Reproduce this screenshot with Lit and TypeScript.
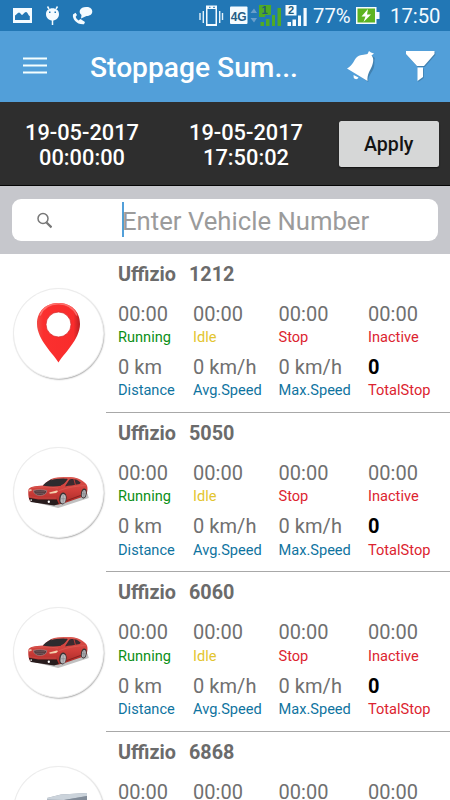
import { LitElement, html, css, svg } from "lit";
import { customElement } from "lit/decorators.js";

type Kind = "pin" | "car" | "truck";

const pinArt = svg`
  <defs>
    <linearGradient id="pg" x1="0" y1="0" x2="1" y2="0">
      <stop offset="0" stop-color="#f04a45"/><stop offset=".15" stop-color="#fb302f"/>
      <stop offset=".85" stop-color="#f92c2c"/><stop offset="1" stop-color="#b81f22"/>
    </linearGradient>
  </defs>
  <path d="M44.500 73.500C40 65.500 23 50.500 23 35C23 22 32 14 44.500 14S66 22 66 35C66 50.500 49 65.500 44.500 73.500Z" fill="url(#pg)"/>
  <path d="M26 26.500C29.500 18 36.500 14.800 44.500 14.800S59 18 63 26.500" fill="none" stroke="#ff8a85" stroke-width="1.500" opacity=".7"/>
  <circle cx="44.500" cy="35.500" r="12.500" fill="#fff" stroke="#d92a2a" stroke-width=".8"/>`;

const carArt = svg`
  <defs>
    <linearGradient id="cg" x1="0" y1="0" x2="0" y2="1">
      <stop offset="0" stop-color="#d9534c"/><stop offset=".5" stop-color="#cf3e3a"/><stop offset="1" stop-color="#a52a27"/>
    </linearGradient>
  </defs>
  <g transform="translate(9.500 22.100) scale(.3333)">
    <path d="M14 92L104 114L196 84L192 70L120 80Z" fill="#8d8d8d" opacity=".55"/>
    <path d="M15 58C17 51 32 47 58 46C70 35 80 27 92 24C112 20 138 20 152 22C166 24 176 31 184 38C190 42 193 50 192 58L190 72L172 82L128 97L106 103L90 104L22 94C15 90 13 70 15 58Z" fill="url(#cg)"/>
    <path d="M58 46C70 35 80 28 90 27C106 25 124 25 133 27C128 35 120 44 113 47C96 50 74 50 58 46Z" fill="#2d2b2e"/>
    <path d="M124 49L138 28C150 25 160 27 172 38L168 42C150 46 138 47 124 49Z" fill="#3a2b30"/>
    <path d="M151 26L156 45" stroke="#b93b38" stroke-width="3"/>
    <path d="M84 29C104 22 138 20 156 25" stroke="#e0685f" fill="none" stroke-width="2"/>
    <path d="M106 62C130 52 160 47 190 46" stroke="#da5f58" fill="none" stroke-width="2"/>
    <path d="M24 53C46 49 80 50 104 54" stroke="#da5f58" fill="none" stroke-width="2"/>
    <path d="M128 92L172 76" stroke="#84211f" stroke-width="3"/>
    <ellipse cx="119" cy="48" rx="7" ry="4.500" fill="#d2443f"/>
    <path d="M30 61C42 58 60 58 70 62C68 71 62 76 50 76C38 76 31 71 30 61Z" fill="#54363a" stroke="#a78f8f" stroke-width="2"/>
    <path d="M36 65H65M38 70H62" stroke="#8b7375" stroke-width="1.500"/>
    <path d="M77 67L100 61L104 63L98 69L79 71Z" fill="#f4d2ae"/>
    <path d="M16 59L23 57L25 62L17 64Z" fill="#edc0a8"/>
    <path d="M16 83L44 88L100 88L106 102L92 106L22 96Z" fill="#271c1d"/>
    <path d="M18 80L46 84L98 84" stroke="#c9504a" stroke-width="2" fill="none"/>
    <circle cx="76" cy="95" r="3.500" fill="#fff"/><circle cx="23" cy="90" r="2.500" fill="#eee"/>
    <ellipse cx="118" cy="85" rx="11" ry="18" fill="#3a3233" transform="rotate(8 118 85)"/>
    <ellipse cx="119" cy="86" rx="8" ry="14" fill="#b9b9bc" transform="rotate(8 119 86)"/>
    <ellipse cx="181" cy="70" rx="8.500" ry="15" fill="#3a3233" transform="rotate(8 181 70)"/>
    <ellipse cx="181" cy="71" rx="6" ry="11.500" fill="#b0b0b4" transform="rotate(8 181 71)"/>
    <path d="M119 74V98M112 86H126M181 61V81M176 71H186" stroke="#85858a" stroke-width="2"/>
  </g>`;

const truckArt = svg`
  <path d="M33 31L47 27.500L73 26L73 60L33 60Z" fill="#98a1ad"/>
  <path d="M33 31L47 27.500L73 26L73 29L50 33L33 32.500Z" fill="#cbd3db"/>
  <path d="M50 33L73 29V60H50Z" fill="#828c99"/>`;

@customElement("vehicle-badge")
class VehicleBadge extends LitElement {
  static properties = { kind: {} };
  declare kind: Kind;
  static styles = css`
    :host { display: block; width: 89px; height: 89px; border-radius: 50%; background: #fff;
      box-shadow: 0 0 0 1px #ececec, .7px .9px 1.500px 0.500px rgba(0,0,0,.42); }
    svg { display: block; width: 89px; height: 89px; }
  `;
  render() {
    const art = this.kind === "pin" ? pinArt : this.kind === "car" ? carArt : truckArt;
    return html`<svg viewBox="0 0 89 89">${art}</svg>`;
  }
}

@customElement("vehicle-row")
class VehicleRow extends LitElement {
  static properties = { number: {}, kind: {} };
  declare number: string;
  declare kind: Kind;
  static styles = css`
    :host { display: flex; height: 159.4px; flex: none; box-sizing: border-box; }
    .side { width: 105.500px; padding: 35.300px 0 0 14px; box-sizing: border-box; flex: none; }
    .body { flex: 1; border-bottom: 1px solid #a8a8a8; padding-left: 12.500px; box-sizing: border-box; }
    .name { font-weight: 700; font-size: 19.8px; line-height: 24px; color: #6b6b6b; padding-top: 9px; white-space: pre; height: 24px; }
    .name span { display: inline-block; width: 71px; }
    .grid { display: grid; grid-template-columns: 75px 85.500px 89.500px 1fr; padding-top: 15.200px; }
    .cell { height: 53.200px; }
    .val { font-size: 20px; line-height: 24px; color: #707070; letter-spacing: .05px; white-space: nowrap; }
    .val.total { color: #000; font-weight: 700; }
    .lab { font-size: 14.600px; line-height: 18px; margin-top: 2.300px; white-space: nowrap; }
    .green { color: #0b8f17; } .yellow { color: #e3c52f; } .red { color: #dc2430; } .blue { color: #0f749f; }
  `;
  render() {
    const cells = [
      ["00:00", "Running", "green"], ["00:00", "Idle", "yellow"], ["00:00", "Stop", "red"], ["00:00", "Inactive", "red"],
      ["0 km", "Distance", "blue"], ["0 km/h", "Avg.Speed", "blue"], ["0 km/h", "Max.Speed", "blue"], ["0", "TotalStop", "red"],
    ];
    const shown = this.kind === "truck" ? cells.slice(0, 4).map(([v]) => [v, "", ""]) : cells;
    return html`
      <div class="side"><vehicle-badge .kind=${this.kind}></vehicle-badge></div>
      <div class="body">
        <div class="name"><span>Uffizio</span>${this.number}</div>
        <div class="grid">${shown.map(([v, l, c]) => html`
          <div class="cell"><div class="val ${l === "TotalStop" ? "total" : ""}">${v}</div><div class="lab ${c}">${l}</div></div>`)}
        </div>
      </div>`;
  }
}

@customElement("status-bar")
class StatusBar extends LitElement {
  static styles = css`
    :host { display: flex; height: 31px; background: #2277b5; color: #f4fbff; align-items: center; flex: none; }
    svg { display: block; flex: none; }
    .gap { flex: 1; }
    .pct { font-size: 20.300px; width: 38px; margin-left: 6px; white-space: nowrap; padding-top: 1px; }
    .batt { margin-left: 5px; }
    .time { font-size: 20.300px; margin-left: 9px; width: 60px; white-space: nowrap; padding-top: 1px; }
    .net { font: 700 13px "Liberation Sans", Arial, sans-serif; }
    .sim { font: 700 11px "Liberation Sans", Arial, sans-serif; }
  `;
  render() {
    return html`
      <svg width="100" height="31" viewBox="0 0 100 31" fill="#f4fbff">
        <path d="M13 8H32V23H13Z"/>
        <path d="M15 20V15.500C16.500 15 17.500 12.500 19 12.500S21 15 22 15C23 15 24.500 11.800 26 12C28 12.200 28 15.500 29.800 16V20Z" fill="#2277b5"/>
        <path fill-rule="evenodd" d="M46 14C46 10.500 49 8.300 52.500 8.300S59 10.500 59 14C59 18 56 20.500 52.500 20.500S46 18 46 14ZM49 11.500v1.500h1.500v-1.500ZM54.500 11.500v1.500H56v-1.500Z"/>
        <path d="M49 9L47.500 6.500M56 9L57.500 6.500M52.500 20V25" stroke="#f4fbff" stroke-width="1.500"/>
        <path d="M73 14.500C72 19 77 25 84 24.300L85 22L80.500 19L78.500 20.500C77 19.500 76 18 75.700 16.800L77 15L75.500 12.800Z"/>
        <path d="M86 7C90 6.500 92.300 9 92.300 11.500C92.300 14.500 89.500 16 86.500 16L81 18.500L81.500 15C79.500 13.500 79.300 11.500 80 10C81 8 83 7 86 7Z"/>
      </svg>
      <div class="gap"></div>
      <svg width="109" height="31" viewBox="198 0 109 31">
        <path fill="#f4fbff" fill-rule="evenodd" d="M206 5.500H217V26H206ZM207.500 9V24H215.500V9Z"/>
        <path d="M209 7.300h1.500M213 7.300h2" stroke="#2277b5"/>
        <path d="M200 13V20M203.300 11V23M219.700 11V23M222.500 13V20" stroke="#e4f2fb" stroke-width="1.400"/>
        <rect x="230" y="6.500" width="17.500" height="17.500" rx="1" fill="#f4fbff"/>
        <text class="net" x="230.700" y="20.500" textLength="16" lengthAdjust="spacingAndGlyphs" fill="#245d86">4G</text>
        <path d="M250.500 13L254 8.500L257 13ZM250.500 18L254 22.500L257 18Z" fill="#6a9fcb"/>
        <path d="M259 5H271V15H265V17H259Z" fill="#4faa25"/>
        <text class="sim" x="261.500" y="14" fill="#225a78">1</text>
        <path d="M260.500 22H264V26H260.500ZM266 19H269.500V26H266ZM272 15H275V26H272ZM277.500 8H281V26H277.500Z" fill="#4faa25"/>
        <rect x="285.500" y="5" width="11" height="10.500" fill="#f4fbff"/>
        <text class="sim" x="288" y="14" fill="#225a78">2</text>
        <path d="M287.500 22H291V26H287.500ZM292.500 19.500H296V26H292.500ZM298 15.500H301V26H298ZM303.500 8H306.700V26H303.500Z" fill="#f4fbff"/>
      </svg>
      <div class="pct">77%</div>
      <svg class="batt" width="25" height="31" viewBox="0 0 25 31">
        <path d="M0 7H20.500V12H23.500V19H20.500V24H0Z" fill="#f4fbff"/>
        <rect x="1.500" y="8.500" width="17.500" height="14" fill="#5db321"/>
        <path d="M12 9L5.500 16.500H9.500L7.500 22L15 14.500H11Z" fill="#fff"/>
      </svg>
      <div class="time">17:50</div>`;
  }
}

@customElement("app-root")
class AppRoot extends LitElement {
  static styles = css`
    :host { display: flex; flex-direction: column; width: 450px; height: 800px; overflow: hidden; background: #fff;
      font-family: Roboto, "Noto Sans", sans-serif; }
    .bar { height: 70.500px; background: #529fd9; display: flex; align-items: center; flex: none; }
    .bar svg { display: block; flex: none; }
    .title { width: 251px; margin-left: 42px; font-size: 28.200px; font-weight: 500; color: #fff; white-space: nowrap; padding-top: 2px; }
    .range { height: 84.500px; background: #2e2e2e; border-bottom: 1.500px solid #050505; box-sizing: border-box; display: flex; flex: none;
      color: #fff; font-size: 21.800px; font-weight: 500; line-height: 25.500px; text-align: center; }
    .date { width: 164px; padding-top: 18px; flex: none; }
    .apply { width: 100.500px; height: 45.500px; margin: 19.500px 0 0 10.500px; background: #d6d7d7; border-radius: 2.500px; color: #141414;
      font: 500 19.600px/47px Roboto, sans-serif; border: 0; padding: 0; box-shadow: 0 1px 1.500px #111; }
    .find { height: 67.500px; background: #c6c7cc; padding: 12.500px 12px 0; box-sizing: border-box; flex: none; }
    .box { width: 425.500px; height: 42.500px; border-radius: 9px; background: #fff; display: flex; align-items: center; }
    .caret { width: 2px; height: 35px; background: #529fd9; margin-left: 69.500px; }
    .hint { color: #9b9b9b; font-size: 25.700px; margin-left: -1.500px; white-space: nowrap; padding-top: 3px; }
    .list { display: flex; flex-direction: column; }
  `;
  render() {
    return html`
      <status-bar></status-bar>
      <div class="bar">
        <svg width="48" height="70" viewBox="0 0 48 70"><path d="M23 27.500H47M23 34.500H47M23 41.500H47" stroke="#f5ffff" stroke-width="2.200"/></svg>
        <div class="title">Stoppage Sum...</div>
        <svg width="109" height="70" viewBox="341 31 109 70">
          <g fill="#35698f" opacity=".55" transform="translate(.8 1)">
            <path d="M350 69C354 65 354 57 358.500 55C362 53 366 54 369 53L374 57C373 61 374.500 65 372 69C370 73 367 76 367.500 81Z"/>
            <path d="M406 51H434.500V54L424 66H417L406 54ZM417.500 67.500H423V77L417.500 81Z"/>
          </g>
          <g fill="#fff">
            <path d="M347 68.500C353 65.500 354 60 356.500 57.500C359.500 54.500 364 55 367.500 54L369 51L371 52.500L374 53.500L371.500 55.500C374 58 373.500 62 372 66C370 71 367 74 367.500 81Z"/>
            <path d="M353.500 75L358.500 77.500C357.500 79.800 355 79.500 353.800 78Z"/>
            <path d="M406 51H434.500V54L424 66H417L406 54ZM417.500 67.500H423V77L417.500 81Z"/>
          </g>
        </svg>
      </div>
      <div class="range">
        <div class="date">19-05-2017<br>00:00:00</div>
        <div class="date">19-05-2017<br>17:50:02</div>
        <button class="apply">Apply</button>
      </div>
      <div class="find"><div class="box">
        <svg width="40" height="42" viewBox="0 0 40 42" fill="none" stroke="#777"><circle cx="31" cy="19.500" r="5" stroke-width="1.500"/><path d="M34.500 23.500L39.500 28.500" stroke-width="2.300"/></svg>
        <div class="caret"></div><div class="hint">Enter Vehicle Number</div>
      </div></div>
      <div class="list">
        <vehicle-row .number=${"1212"} .kind=${"pin"}></vehicle-row>
        <vehicle-row .number=${"5050"} .kind=${"car"}></vehicle-row>
        <vehicle-row .number=${"6060"} .kind=${"car"}></vehicle-row>
        <vehicle-row .number=${"6868"} .kind=${"truck"}></vehicle-row>
      </div>`;
  }
}
